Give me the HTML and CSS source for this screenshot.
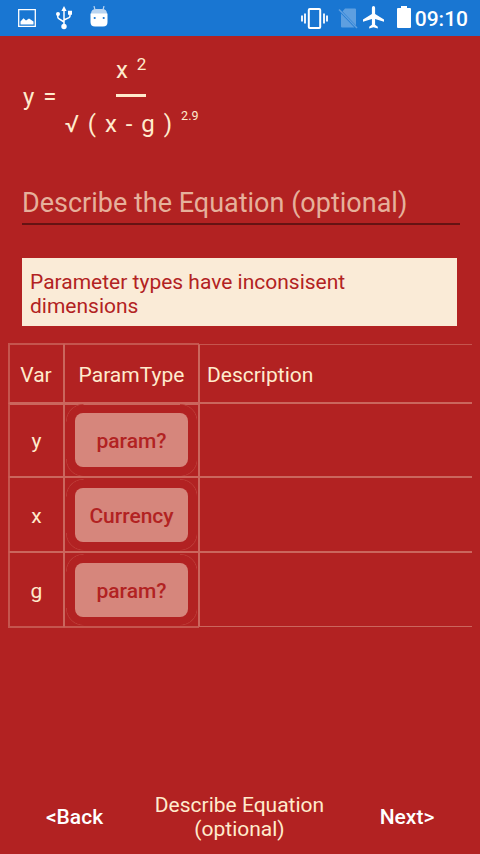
FILE: index.html
```html
<!DOCTYPE html>
<html lang="en">
<head>
<meta charset="utf-8">
<title>Describe Equation</title>
<link rel="stylesheet" href="styles.css">
</head>
<body>
<header class="status">
  <svg class="ic-picture" width="18" height="18" viewBox="0 0 18 18"><path d="M.7.7h16.6v16.6H.7z" fill="none" stroke="#fff" stroke-width="1.3"/><path d="M2.500 15.500v-3l3-3.300 2.500 2.300 3-2 4.500 3v3z" fill="#fff"/></svg>
  <svg class="ic-usb" width="16" height="24" viewBox="0 0 16 24"><path d="M8 4v16M1.800 8v3q0 1 1 1.600L8 16M14 7v3q0 1-1 1.600L8 14" fill="none" stroke="#fff" stroke-width="1.500"/><path d="M8 0l2.600 5H5.400zM12 4.800h4v4h-4z" fill="#fff"/><circle cx="2" cy="8" r="2" fill="#fff"/><circle cx="8" cy="20.500" r="2.700" fill="#fff"/></svg>
  <svg class="ic-droid" width="18" height="21" viewBox="0 0 18 21"><path d="M4 0l1 4M14 0l-1 4" stroke="#b9d4f1" stroke-width="1.200"/><path d="M1 8q0-5 5-5h6q5 0 5 5z" fill="#b9d4f1"/><path d="M.5 7.500h17V16q0 4.500-4.500 4.500H5Q.5 20.500.5 16z" fill="#fff"/><circle cx="4.700" cy="12" r="1.100" fill="#1976d2"/><circle cx="13.700" cy="12" r="1.100" fill="#1976d2"/></svg>
  <span class="grow"></span>
  <svg class="ic-vibrate" width="27" height="21" viewBox="0 0 27 21"><path d="M1 7.500v6M4 5.500v10M23 5.500v10M26 7.500v6" stroke="#fff" stroke-width="1.800"/><rect x="7.800" y="1" width="11.400" height="19" rx="1" fill="none" stroke="#fff" stroke-width="2"/></svg>
  <svg class="ic-nosim" width="20" height="21" viewBox="0 0 20 21"><path d="M7 .5h10q1 0 1 1V17.500L4.500 3.500zM3 5.500l13.500 14H4q-1 0-1-1z" fill="#5e9fe0"/><path d="M1 1.500l18 18.500" stroke="#5e9fe0" stroke-width="1.500"/></svg>
  <svg class="ic-plane" width="21" height="23" viewBox="0 0 21 23"><path d="M10.500 0q1.600 0 1.600 1.800v6.200L21 13.500v2.300l-8.900-2.800v5.700l2.700 2v1.800l-4.300-1.300-4.300 1.300v-1.800l2.700-2V13L0 15.800v-2.300L8.900 8V1.800Q8.900 0 10.500 0z" fill="#fff"/></svg>
  <svg class="ic-battery" width="14" height="22" viewBox="0 0 14 22"><path d="M4 0h6v2h3q1 0 1 1v18q0 1-1 1H1q-1 0-1-1V3q0-1 1-1h3z" fill="#fff"/></svg>
  <span class="clock">09:10</span>
</header>
<main class="screen">
  <section class="equation">
    <span class="lhs">y =</span>
    <div class="fraction">
      <div class="numerator">x <sup>2</sup></div>
      <div class="bar"></div>
      <div class="denominator">√ ( x - g ) <sup>2.9</sup></div>
    </div>
  </section>
  <div class="field">Describe the Equation (optional)</div>
  <div class="message">Parameter types have inconsisent dimensions</div>
  <section class="table">
    <div class="cell first head">Var</div><div class="cell type head">ParamType</div><div class="cell desc head">Description</div>
    <div class="cell first top">y</div><div class="cell type top"><div class="ring"><span class="button">param?</span></div></div><div class="cell desc"></div>
    <div class="cell first">x</div><div class="cell type"><div class="ring"><span class="button">Currency</span></div></div><div class="cell desc"></div>
    <div class="cell first last">g</div><div class="cell type last"><div class="ring"><span class="button">param?</span></div></div><div class="cell desc"></div>
  </section>
</main>
<footer class="nav">
  <span class="link">&lt;Back</span>
  <span class="title">Describe Equation (optional)</span>
  <span class="link next">Next&gt;</span>
</footer>
</body>
</html>
```

FILE: styles.css
```css
* { box-sizing: border-box; }
body {
  margin: 0;
  height: 854px;
  display: flex;
  flex-direction: column;
  overflow: hidden;
  background: #b22222;
  color: #ffebcd;
  font: 21px/24px Roboto, sans-serif;
}
svg { display: block; flex: none; }
.status {
  height: 36px;
  flex: none;
  display: flex;
  align-items: flex-start;
  padding: 0 12px 0 18px;
  background: #1976d2;
  color: #fff;
}
.grow { flex: 1; }
.ic-picture { margin-top: 9px; }
.ic-usb { margin: 6px 0 0 20px; }
.ic-droid { margin: 6px 0 0 18px; }
.ic-vibrate { margin: 8px 10px 0 0; }
.ic-nosim { margin: 8px 5px 0 0; }
.ic-plane { margin: 6px 13px 0 0; }
.ic-battery { margin: 6px 3.5px 0 0; }
.clock { font-weight: 500; line-height: 38px; }
.screen { flex: 1; }
.equation {
  display: flex;
  align-items: flex-start;
  height: 144px;
  padding: 20px 0 0 23px;
  font-size: 24px;
  line-height: 28px;
  white-space: nowrap;
}
.lhs { margin-top: 27px; word-spacing: 3px; }
.fraction { margin-left: 8px; }
.numerator { margin-left: 51.5px; word-spacing: 3px; }
.numerator sup { font-size: 17px; line-height: 0; vertical-align: 8px; }
.bar { width: 30px; height: 3px; margin: 10px 0 13px 52px; background: #ffebcd; }
.denominator { word-spacing: 3px; }
.denominator sup { font-size: 12.5px; line-height: 0; vertical-align: 12px; }
.field {
  width: 438px;
  height: 45px;
  margin-left: 22px;
  border-bottom: 2px solid #651313;
  color: #e6b09b;
  font-size: 27px;
  line-height: 46px;
}
.message {
  width: 435px;
  height: 68px;
  margin: 33px 0 0 22px;
  padding: 12px 8px 0;
  background: #faebd7;
  color: #b22222;
}
.table {
  display: grid;
  grid-template-columns: 56px 135px 273px;
  grid-template-rows: 60px 74px 75px 76px;
  margin: 17px 8px 0;
}
.cell {
  display: flex;
  align-items: center;
  justify-content: center;
  padding-top: 2px;
  border: 1px solid #cb665d;
}
.first { border-left: 2px solid #c5554e; }
.first.head { padding-right: 1px; }
.type { padding-top: 0; }
.head { padding-top: 3px; border-top: 2px solid #c5554e; }
.top { padding-top: 0; border-top-width: 2px; }
.last { border-bottom: 2px solid #c5554e; }
.desc { justify-content: flex-start; padding-left: 7px; border-right: 0; }
.desc.head { margin-top: 1px; border-top: 1px solid #c5554e; }
.desc:last-child { margin-bottom: 1px; }
.ring {
  --arc: #0000 16.5px, #bc3b36 17px, #0000 18px;
  width: 131px;
  height: 72px;
  flex: none;
  padding: 9px;
  background:
    radial-gradient(circle at 100% 100%, var(--arc)) 0 0 / 17.5px 17.5px,
    radial-gradient(circle at 0 100%, var(--arc)) 100% 0 / 17.5px 17.5px,
    radial-gradient(circle at 100% 0, var(--arc)) 0 100% / 17.5px 17.5px,
    radial-gradient(circle at 0 0, var(--arc)) 100% 100% / 17.5px 17.5px;
  background-repeat: no-repeat;
}
.top .ring { margin-top: -1px; }
.button {
  display: block;
  width: 113px;
  height: 54px;
  border-radius: 8px;
  background: #d6867c;
  color: #b22222;
  font-weight: 500;
  line-height: 56px;
  text-align: center;
}
.nav {
  height: 74px;
  flex: none;
  display: grid;
  grid-template-columns: 149px 181px 150px;
  align-items: center;
  text-align: center;
}
.link { color: #fff; font-weight: 500; }
.next { padding-left: 4px; }
```
